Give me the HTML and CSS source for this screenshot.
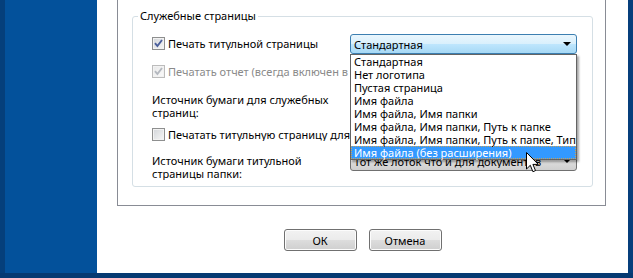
FILE: index.html
```html
<!DOCTYPE HTML>
<html>

<head>
  <meta charset="utf-8">
  <link rel="stylesheet" href="styles.css">
</head>

<body>
  <div class="screen">
    <div class="main">
      <div class="desktop"></div>

      <div class="dialog">
        <div class="tabpage">
          <fieldset class="group">
            <legend>Служебные страницы</legend>

            <div class="row row-combo first">
              <label class="check">
                <span class="box">
                  <svg width="11" height="11" viewBox="0 0 11 11"><path d="M2 5.2l2.4 2.8L9 2" fill="none" stroke="#4a5e9b" stroke-width="1.9"/></svg>
                </span>
                Печать титульной страницы
              </label>
              <div class="combo focused">
                <span class="value">Стандартная</span>
                <span class="arrow"></span>
                <ul class="list">
                  <li>Стандартная</li>
                  <li>Нет логотипа</li>
                  <li>Пустая страница</li>
                  <li>Имя файла</li>
                  <li>Имя файла, Имя папки</li>
                  <li>Имя файла, Имя папки, Путь к папке</li>
                  <li>Имя файла, Имя папки, Путь к папке, Тип</li>
                  <li class="hot">Имя файла (без расширения)</li>
                </ul>
              </div>
            </div>

            <div class="row second">
              <label class="check disabled">
                <span class="box">
                  <svg width="11" height="11" viewBox="0 0 11 11"><path d="M2 5.2l2.4 2.8L9 2" fill="none" stroke="#b4b8bf" stroke-width="1.9"/></svg>
                </span>
                Печатать отчет (всегда включен в режиме отладки)
              </label>
            </div>

            <div class="row row-combo third">
              <div class="caption">Источник бумаги для служебных<br>страниц:</div>
            </div>

            <div class="row fourth">
              <label class="check">
                <span class="box"></span>
                Печатать титульную страницу для каждой папки
              </label>
            </div>

            <div class="row row-combo fifth">
              <div class="caption">Источник бумаги титульной<br>страницы папки:</div>
              <div class="combo">
                <span class="value">Тот же лоток что и для документов</span>
                <span class="arrow"></span>
              </div>
            </div>
          </fieldset>
        </div>

        <div class="buttons">
          <button class="btn">ОК</button>
          <button class="btn">Отмена</button>
        </div>
      </div>

      <div class="edge"></div>
    </div>
    <div class="bottom"></div>

    <!-- mouse pointer over the open list -->
    <svg class="cursor" width="13" height="21" viewBox="0 0 13 21">
      <path d="M0.5 0.5v16.5l3.8-3.7 2.6 6.4 2.6-1.1-2.6-6.2h5.4z" fill="#fff" stroke="#000" stroke-width="1" stroke-linejoin="round"/>
    </svg>
  </div>
</body>
</html>
```

FILE: styles.css
```css
body {
  margin: 0;
  font-family: "Noto Sans", sans-serif;
  font-size: 11px;
  line-height: 13px;
  color: #000;
}

.screen {
  position: relative;
  width: 633px;
  height: 278px;
  overflow: hidden;
  background: #063a72;
}

.main {
  display: flex;
  height: 273px;
}

.desktop {
  width: 92px;
  border-left: 5px solid #053f7b;
  background: #03519b;
}

.dialog {
  width: 531px;
  background: #fff;
}

.edge {
  width: 5px;
  background: #063f7c;
}

.bottom {
  height: 5px;
  background: #063a72;
}

/* tab page with the group box */
.tabpage {
  box-sizing: border-box;
  width: 489px;
  height: 206px;
  margin-left: 20px;
  padding: 8px 12px 0 14px;
  border: 1px solid #898c95;
  border-top: none;
}

.group {
  margin: 0;
  padding: 10px 0 6px 19px;
  min-width: 0;
  height: 179px;
  box-sizing: border-box;
  border: 1px solid #d5dfe5;
  border-radius: 3px;
}

.group legend {
  margin-left: -14px;
  padding: 0 2px;
  line-height: 16px;
}

.row {
  display: flex;
  align-items: flex-start;
  white-space: nowrap;
}

/* left column ends where the combo / open list starts */
.row > .check,
.row > .caption {
  width: 198px;
  overflow: hidden;
}

.row-combo > .check,
.row-combo > .caption {
  padding-top: 3px;
}

.second { margin-top: 11px; }
.third { margin-top: 12px; }
.fourth { margin-top: 9px; }
.fifth { margin-top: 10px; }

.check {
  display: flex;
  align-items: center;
}

.check.disabled {
  color: #8a8a8a;
}

.box {
  box-sizing: border-box;
  display: flex;
  flex: none;
  align-items: center;
  justify-content: center;
  width: 13px;
  height: 13px;
  margin-right: 3px;
  border: 1px solid #8e8f8f;
  background: linear-gradient(135deg, #d2d5d9, #f7f7f7);
  box-shadow: inset 0 0 0 1px #f2f2f2;
}

.disabled .box {
  border-color: #bcbcbc;
  background: linear-gradient(135deg, #e8e8e8, #fbfbfb);
}

/* combo boxes */
.combo {
  position: relative;
  box-sizing: border-box;
  display: flex;
  align-items: center;
  width: 227px;
  height: 20px;
  padding: 0 5px 0 3px;
  border: 1px solid #707070;
  border-radius: 3px;
  background: linear-gradient(#f2f2f2 0%, #ebebeb 50%, #dddddd 51%, #cfcfcf 100%);
}

.combo.focused {
  z-index: 2;
  border-color: #3c7fb1;
  background: linear-gradient(#eaf6fd 0%, #d9f0fc 50%, #bee6fd 51%, #a7d9f5 100%);
}

.combo .value {
  flex: 1;
  overflow: hidden;
}

.arrow {
  width: 0;
  height: 0;
  border-left: 4px solid transparent;
  border-right: 4px solid transparent;
  border-top: 4px solid #000;
}

.list {
  position: absolute;
  top: 19px;
  left: -1px;
  box-sizing: border-box;
  width: 227px;
  margin: 0;
  padding: 0;
  list-style: none;
  border: 1px solid #646464;
  background: #fff;
  box-shadow: 2px 2px 2px rgba(0, 0, 0, 0.35);
}

.list li {
  height: 13px;
  padding-left: 3px;
}

.list .hot {
  background: #3399ff;
  color: #fff;
  outline: 1px dotted #c7a35e;
  outline-offset: -1px;
}

/* dialog buttons */
.buttons {
  display: flex;
  justify-content: center;
  gap: 12px;
  margin-top: 23px;
}

.btn {
  width: 73px;
  height: 22px;
  padding: 0;
  font-family: inherit;
  font-size: inherit;
  color: #000;
  border: 1px solid #707070;
  border-radius: 3px;
  background: linear-gradient(#f2f2f2 0%, #ebebeb 50%, #dddddd 51%, #cfcfcf 100%);
  box-shadow: inset 0 0 0 1px #fcfcfc;
}

.cursor {
  position: absolute;
  left: 526px;
  top: 152px;
  z-index: 5;
}
```
